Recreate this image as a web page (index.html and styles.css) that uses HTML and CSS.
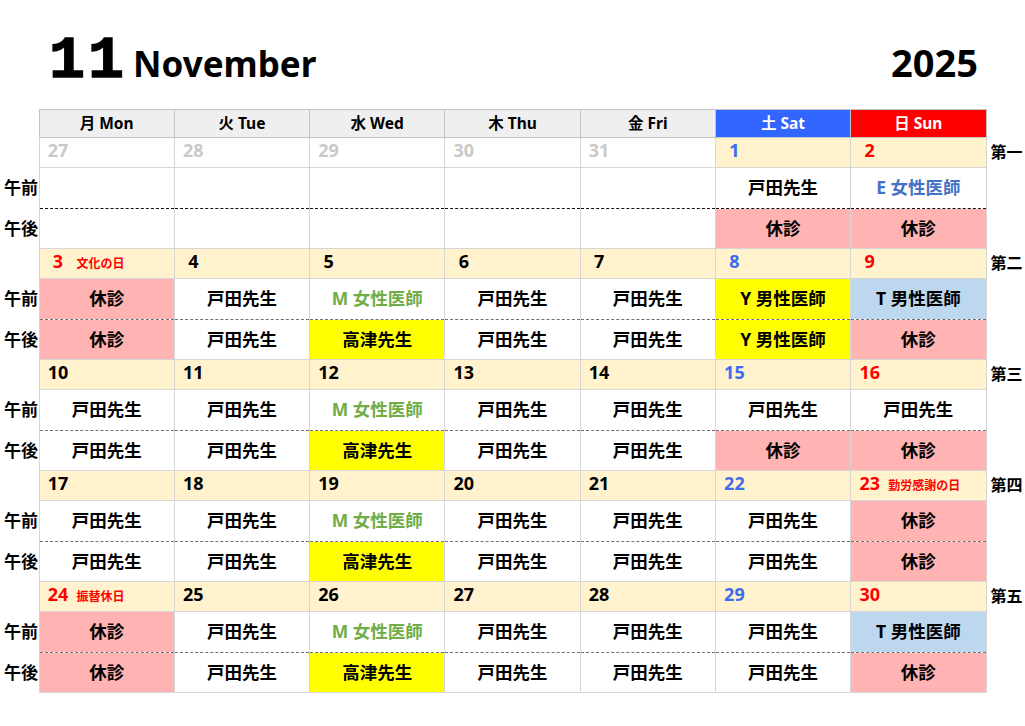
FILE: index.html
```html
<!DOCTYPE html>
<html lang="ja">
<head>
<meta charset="utf-8">
<title>11 November 2025</title>
<link rel="stylesheet" href="styles.css">
</head>
<body>
<div class="page">
  <header class="title">
    <span class="mnum">11</span>
    <span class="mname">November</span>
    <span class="year">2025</span>
  </header>
  <table class="cal">
    <colgroup>
      <col class="c-lab"><col><col><col><col><col><col><col><col class="c-lab">
    </colgroup>
    <thead>
      <tr class="hd">
        <th class="lab"></th>
        <th>月 Mon</th><th>火 Tue</th><th>水 Wed</th><th>木 Thu</th><th>金 Fri</th>
        <th class="h-sat">土 Sat</th><th class="h-sun">日 Sun</th>
        <th class="lab"></th>
      </tr>
    </thead>
    <tbody>
      <!-- week 1 -->
      <tr class="dr">
        <td class="lab"></td>
        <td class="prev"><span class="n">27</span></td>
        <td class="prev"><span class="n">28</span></td>
        <td class="prev"><span class="n">29</span></td>
        <td class="prev"><span class="n">30</span></td>
        <td class="prev"><span class="n">31</span></td>
        <td class="sat"><span class="n">1</span></td>
        <td class="sun"><span class="n">2</span></td>
        <td class="lab rl">第一</td>
      </tr>
      <tr class="am dk">
        <td class="lab ll">午前</td>
        <td></td><td></td><td></td><td></td><td></td>
        <td>戸田先生</td><td class="blue">E 女性医師</td>
        <td class="lab"></td>
      </tr>
      <tr class="pm dk">
        <td class="lab ll">午後</td>
        <td></td><td></td><td></td><td></td><td></td>
        <td class="off">休診</td><td class="off">休診</td>
        <td class="lab"></td>
      </tr>
      <!-- week 2 -->
      <tr class="dr">
        <td class="lab"></td>
        <td class="hol"><span class="n">3</span><span class="hn">文化の日</span></td>
        <td><span class="n">4</span></td>
        <td><span class="n">5</span></td>
        <td><span class="n">6</span></td>
        <td><span class="n">7</span></td>
        <td class="sat"><span class="n">8</span></td>
        <td class="sun"><span class="n">9</span></td>
        <td class="lab rl">第二</td>
      </tr>
      <tr class="am">
        <td class="lab ll">午前</td>
        <td class="off">休診</td><td>戸田先生</td><td class="green">M 女性医師</td><td>戸田先生</td><td>戸田先生</td>
        <td class="yel">Y 男性医師</td><td class="lb">T 男性医師</td>
        <td class="lab"></td>
      </tr>
      <tr class="pm">
        <td class="lab ll">午後</td>
        <td class="off">休診</td><td>戸田先生</td><td class="yel">高津先生</td><td>戸田先生</td><td>戸田先生</td>
        <td class="yel">Y 男性医師</td><td class="off">休診</td>
        <td class="lab"></td>
      </tr>
      <!-- week 3 -->
      <tr class="dr">
        <td class="lab"></td>
        <td><span class="n">10</span></td>
        <td><span class="n">11</span></td>
        <td><span class="n">12</span></td>
        <td><span class="n">13</span></td>
        <td><span class="n">14</span></td>
        <td class="sat"><span class="n">15</span></td>
        <td class="sun"><span class="n">16</span></td>
        <td class="lab rl">第三</td>
      </tr>
      <tr class="am">
        <td class="lab ll">午前</td>
        <td>戸田先生</td><td>戸田先生</td><td class="green">M 女性医師</td><td>戸田先生</td><td>戸田先生</td>
        <td>戸田先生</td><td>戸田先生</td>
        <td class="lab"></td>
      </tr>
      <tr class="pm">
        <td class="lab ll">午後</td>
        <td>戸田先生</td><td>戸田先生</td><td class="yel">高津先生</td><td>戸田先生</td><td>戸田先生</td>
        <td class="off">休診</td><td class="off">休診</td>
        <td class="lab"></td>
      </tr>
      <!-- week 4 -->
      <tr class="dr">
        <td class="lab"></td>
        <td><span class="n">17</span></td>
        <td><span class="n">18</span></td>
        <td><span class="n">19</span></td>
        <td><span class="n">20</span></td>
        <td><span class="n">21</span></td>
        <td class="sat"><span class="n">22</span></td>
        <td class="sun"><span class="n">23</span><span class="hn">勤労感謝の日</span></td>
        <td class="lab rl">第四</td>
      </tr>
      <tr class="am">
        <td class="lab ll">午前</td>
        <td>戸田先生</td><td>戸田先生</td><td class="green">M 女性医師</td><td>戸田先生</td><td>戸田先生</td>
        <td>戸田先生</td><td class="off">休診</td>
        <td class="lab"></td>
      </tr>
      <tr class="pm">
        <td class="lab ll">午後</td>
        <td>戸田先生</td><td>戸田先生</td><td class="yel">高津先生</td><td>戸田先生</td><td>戸田先生</td>
        <td>戸田先生</td><td class="off">休診</td>
        <td class="lab"></td>
      </tr>
      <!-- week 5 -->
      <tr class="dr">
        <td class="lab"></td>
        <td class="hol"><span class="n">24</span><span class="hn">振替休日</span></td>
        <td><span class="n">25</span></td>
        <td><span class="n">26</span></td>
        <td><span class="n">27</span></td>
        <td><span class="n">28</span></td>
        <td class="sat"><span class="n">29</span></td>
        <td class="sun"><span class="n">30</span></td>
        <td class="lab rl">第五</td>
      </tr>
      <tr class="am">
        <td class="lab ll">午前</td>
        <td class="off">休診</td><td>戸田先生</td><td class="green">M 女性医師</td><td>戸田先生</td><td>戸田先生</td>
        <td>戸田先生</td><td class="lb">T 男性医師</td>
        <td class="lab"></td>
      </tr>
      <tr class="pm">
        <td class="lab ll">午後</td>
        <td class="off">休診</td><td>戸田先生</td><td class="yel">高津先生</td><td>戸田先生</td><td>戸田先生</td>
        <td>戸田先生</td><td class="off">休診</td>
        <td class="lab"></td>
      </tr>
    </tbody>
  </table>
</div>
</body>
</html>
```

FILE: styles.css
```css
* { box-sizing: border-box; }
html, body { margin: 0; padding: 0; background: #fff; }
body {
  font-family: "Noto Sans", "Noto Sans CJK JP", sans-serif;
  color: #000;
}
.page { width: 1025px; }

.title {
  display: flex;
  align-items: baseline;
  height: 109px;
  padding: 31px 47px 0 49px;
}
.mnum {
  font-family: "Liberation Mono", monospace;
  font-weight: bold;
  font-size: 60px;
  line-height: 1;
  letter-spacing: 3px;
  -webkit-text-stroke: 1.4px #000;
}
.mname {
  font-weight: bold;
  font-size: 35px;
  line-height: 1;
  margin-left: 6px;
}
.year {
  margin-left: auto;
  font-weight: bold;
  font-size: 38px;
  line-height: 1;
}

.cal {
  width: 1025px;
  table-layout: fixed;
  border-collapse: collapse;
  font-weight: bold;
}
.c-lab { width: 39px; }
.cal td, .cal th {
  border: 1px solid #d6d6d6;
  padding: 0;
  white-space: nowrap;
  overflow: hidden;
}
.cal .lab { border: none; }

.hd { height: 28px; }
.hd th {
  background: #efefef;
  font-size: 15.5px;
  font-weight: bold;
  text-align: center;
  border-color: #c4c4c4;
  padding-bottom: 3px;
}
.hd th.lab { background: transparent; }
.hd th.h-sat { background: #3366ff; color: #fff; }
.hd th.h-sun { background: #ff0000; color: #fff; }

.dr { height: 30px; }
.dr td {
  background: #fff2cc;
  text-align: left;
  vertical-align: middle;
  padding-bottom: 3px;
}
.dr td.lab { background: transparent; }
.dr td.prev { background: #fff; color: #c9c9c9; }
.n {
  display: inline-block;
  width: 23px;
  margin-left: 7px;
  text-align: center;
  font-size: 18px;
  line-height: 20px;
}
.hn {
  display: inline-block;
  margin-left: 7px;
  font-size: 12px;
  line-height: 20px;
  color: #ff0000;
}
.dr td.sat { color: #3d6cf0; }
.dr td.sun, .dr td.hol { color: #ff0000; }

.am { height: 41px; }
.pm { height: 40px; }
.am td, .pm td {
  text-align: center;
  vertical-align: middle;
  font-size: 17.5px;
  padding-bottom: 3px;
}
.am td { border-bottom: 1px dashed #707070; }
.pm td { border-top: 1px dashed #707070; }
.am.dk td { border-bottom-color: #111; }
.pm.dk td { border-top-color: #111; border-bottom-color: #d6d6d6; }
.am td.lab, .pm td.lab { border: none; }
.cal td.ll { text-align: left; padding-left: 4px; font-size: 17px; }
.cal td.rl { padding-left: 4px; font-size: 16px; }

.off { background: #ffb3b3; }
.yel { background: #ffff00; }
.lb { background: #bdd7ee; }
.green { color: #70ad47; }
.blue { color: #4472c4; }
```
